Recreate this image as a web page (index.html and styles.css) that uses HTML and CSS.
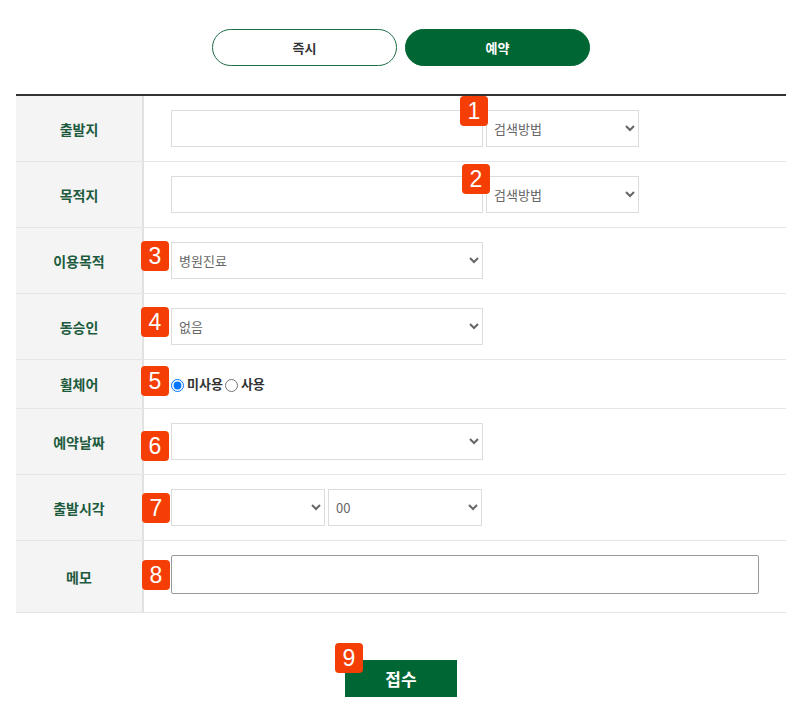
FILE: index.html
```html
<!DOCTYPE html>
<html lang="ko">
<head>
<meta charset="utf-8">
<link rel="stylesheet" href="styles.css">
</head>
<body>
<div class="page">
  <div class="tabs">
    <button class="tab">즉시</button>
    <button class="tab tab-on">예약</button>
  </div>

  <div class="form">
    <div class="row">
      <div class="label">출발지</div>
      <div class="cell">
        <input class="inp inp-wide" type="text">
        <span class="wrap">
          <span class="badge b1">1</span>
          <select class="sel sel-mid"><option>검색방법</option></select>
        </span>
      </div>
    </div>
    <div class="row">
      <div class="label">목적지</div>
      <div class="cell">
        <input class="inp inp-wide" type="text">
        <span class="wrap">
          <span class="badge b2">2</span>
          <select class="sel sel-mid"><option>검색방법</option></select>
        </span>
      </div>
    </div>
    <div class="row">
      <div class="label">이용목적</div>
      <div class="cell">
        <span class="wrap">
          <span class="badge b3">3</span>
          <select class="sel sel-wide"><option>병원진료</option></select>
        </span>
      </div>
    </div>
    <div class="row">
      <div class="label">동승인</div>
      <div class="cell">
        <span class="wrap">
          <span class="badge b3">4</span>
          <select class="sel sel-wide"><option>없음</option></select>
        </span>
      </div>
    </div>
    <div class="row row-short">
      <div class="label">휠체어</div>
      <div class="cell cell-radio">
        <span class="wrap">
          <span class="badge b5">5</span>
          <label class="radio"><input type="radio" name="wc" checked>미사용</label>
        </span>
        <label class="radio"><input type="radio" name="wc">사용</label>
      </div>
    </div>
    <div class="row">
      <div class="label">예약날짜</div>
      <div class="cell">
        <span class="wrap">
          <span class="badge b6">6</span>
          <select class="sel sel-wide"><option></option></select>
        </span>
      </div>
    </div>
    <div class="row">
      <div class="label">출발시각</div>
      <div class="cell">
        <span class="wrap">
          <span class="badge b7">7</span>
          <select class="sel sel-half"><option></option></select>
        </span>
        <select class="sel sel-half"><option>00</option></select>
      </div>
    </div>
    <div class="row row-memo">
      <div class="label">메모</div>
      <div class="cell">
        <span class="wrap">
          <span class="badge b8">8</span>
          <textarea class="memo" rows="1"></textarea>
        </span>
      </div>
    </div>
  </div>

  <div class="actions">
    <span class="wrap">
      <span class="badge b9">9</span>
      <button class="submit">접수</button>
    </span>
  </div>
</div>
</body>
</html>
```

FILE: styles.css
```css
* { box-sizing: border-box; }

body {
  margin: 0;
  background: #fff;
  font-family: "Noto Sans CJK KR", "Noto Sans", sans-serif;
  color: #333;
}

.page {
  width: 770px;
  margin-left: 16px;
  padding-top: 29px;
}

.tabs {
  display: flex;
  justify-content: center;
  gap: 8px;
  margin-bottom: 28px;
}

.tab {
  width: 185px;
  height: 37px;
  border: 1px solid #1f6b46;
  border-radius: 19px;
  background: #fff;
  color: #333;
  font-family: inherit;
  font-size: 13px;
  font-weight: 700;
  padding: 0;
}

.tab-on {
  background: #006633;
  border-color: #006633;
  color: #fff;
}

.form {
  border-top: 2px solid #333;
}

.row {
  display: flex;
  border-bottom: 1px solid #e6e6e6;
}

.label {
  width: 128px;
  flex: none;
  background: #f4f4f4;
  border-right: 2px solid #e2e2e2;
  display: flex;
  align-items: center;
  justify-content: center;
  color: #1e5b3e;
  font-weight: 700;
  font-size: 14px;
}

.cell {
  flex: 1;
  padding: 14px 0 14px 27px;
  display: flex;
  align-items: center;
  gap: 3px;
}

.row-short .cell {
  padding-top: 14px;
  padding-bottom: 15px;
  height: 48px;
}

.row-memo .cell {
  padding-top: 14px;
  padding-bottom: 18px;
}

.wrap {
  position: relative;
  display: inline-flex;
  align-items: center;
}

.inp,
.sel {
  height: 37px;
  border: 1px solid #dcdcdc;
  border-radius: 0;
  background: #fff;
  font-family: "Noto Sans CJK KR", sans-serif;
  font-size: 13px;
  color: #666;
  padding: 0 3px;
  margin: 0;
  outline: none;
}

.inp-wide { width: 312px; }
.sel-mid { width: 153px; }
.sel-wide { width: 312px; }
.sel-half { width: 154px; }

.cell-radio {
  gap: 2px;
}

.radio {
  display: inline-flex;
  align-items: center;
  font-size: 13px;
  font-weight: 700;
  color: #333;
}

.radio input {
  margin: 4px 3px 0 0;
  width: 13px;
  height: 13px;
}

.memo {
  width: 588px;
  height: 39px;
  border: 1px solid #9a9a9a;
  border-radius: 2px;
  resize: none;
  margin: 0;
  display: block;
}

.badge {
  position: absolute;
  width: 28px;
  height: 30px;
  border-radius: 4px;
  background: #f43e05;
  color: #fff;
  font-family: "Liberation Sans", Arial, sans-serif;
  font-size: 23px;
  line-height: 30px;
  text-align: center;
  z-index: 2;
}

.b1 { left: -26px; top: -14px; }
.b2 { left: -24px; top: -12px; }
.b3 { left: -30px; top: -1px; }
.b5 { left: -30px; top: -8px; }
.b6 { left: -30px; top: 8px; }
.b7 { left: -29px; top: 4px; }
.b8 { left: -29px; top: 5px; }
.b9 { left: -10px; top: -17px; }

.actions {
  display: flex;
  justify-content: center;
  padding-top: 47px;
}

.submit {
  width: 112px;
  height: 37px;
  border: 0;
  background: #006633;
  color: #fff;
  font-family: "Noto Sans CJK KR", sans-serif;
  font-size: 17px;
  font-weight: 700;
  padding: 0;
}
```
